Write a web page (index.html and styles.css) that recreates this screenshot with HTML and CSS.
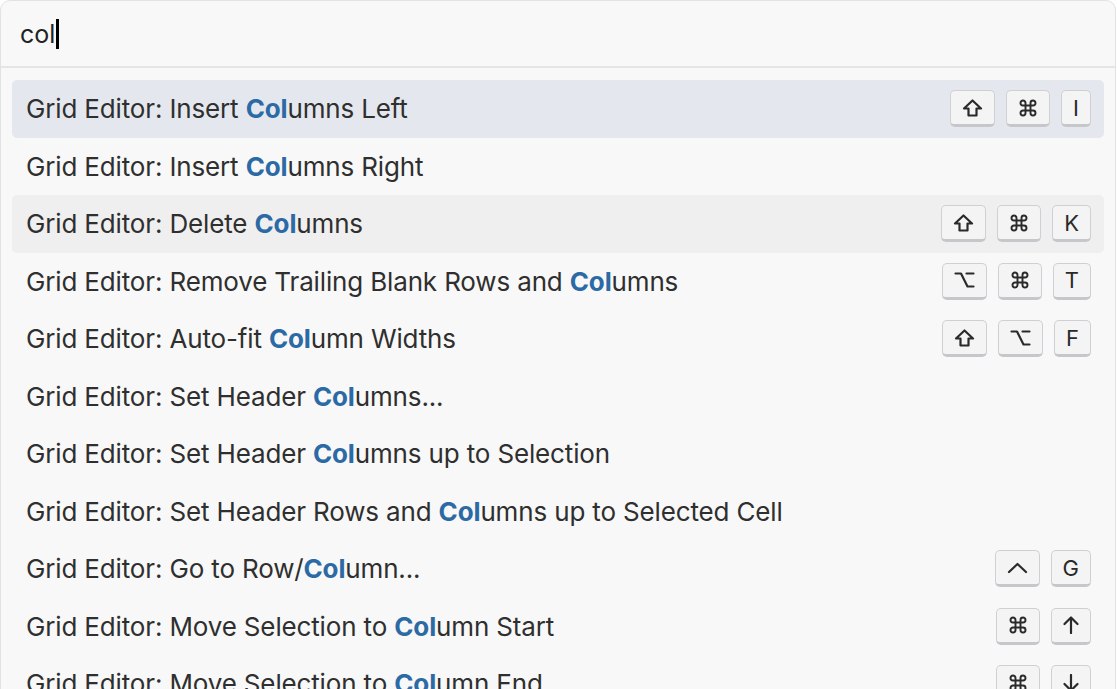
FILE: index.html
```html
<!DOCTYPE html>
<html>
<head>
<meta charset="utf-8">
<link rel="stylesheet" href="styles.css">
</head>
<body>
<div class="palette">
  <div class="input-area">
    <span class="query">col</span><span class="caret"></span>
  </div>
  <div class="list">
    <div class="row selected">
      <span class="label">Grid Editor: Insert <b>Col</b>umns Left</span>
      <span class="keys">
        <span class="key"><svg class="ico" viewBox="0 0 20 18"><path d="M10 1.5 L18.5 9.5 H14 V16.5 H6 V9.5 H1.5 Z"/></svg></span>
        <span class="key"><svg class="ico cmd" viewBox="0 0 24 24"><path d="M15 6v12a3 3 0 1 0 3-3H6a3 3 0 1 0 3 3V6a3 3 0 1 0-3 3h12a3 3 0 1 0-3-3"/></svg></span>
        <span class="key">I</span>
      </span>
    </div>
    <div class="row">
      <span class="label">Grid Editor: Insert <b>Col</b>umns Right</span>
    </div>
    <div class="row hover">
      <span class="label">Grid Editor: Delete <b>Col</b>umns</span>
      <span class="keys">
        <span class="key"><svg class="ico" viewBox="0 0 20 18"><path d="M10 1.5 L18.5 9.5 H14 V16.5 H6 V9.5 H1.5 Z"/></svg></span>
        <span class="key"><svg class="ico cmd" viewBox="0 0 24 24"><path d="M15 6v12a3 3 0 1 0 3-3H6a3 3 0 1 0 3 3V6a3 3 0 1 0-3 3h12a3 3 0 1 0-3-3"/></svg></span>
        <span class="key">K</span>
      </span>
    </div>
    <div class="row">
      <span class="label">Grid Editor: Remove Trailing Blank Rows and <b>Col</b>umns</span>
      <span class="keys">
        <span class="key"><svg class="ico" viewBox="0 0 20 18"><path d="M1 2.5 H6.5 L13 15.5 H19 M12 2.5 H19"/></svg></span>
        <span class="key"><svg class="ico cmd" viewBox="0 0 24 24"><path d="M15 6v12a3 3 0 1 0 3-3H6a3 3 0 1 0 3 3V6a3 3 0 1 0-3 3h12a3 3 0 1 0-3-3"/></svg></span>
        <span class="key">T</span>
      </span>
    </div>
    <div class="row">
      <span class="label">Grid Editor: Auto-fit <b>Col</b>umn Widths</span>
      <span class="keys">
        <span class="key"><svg class="ico" viewBox="0 0 20 18"><path d="M10 1.5 L18.5 9.5 H14 V16.5 H6 V9.5 H1.5 Z"/></svg></span>
        <span class="key"><svg class="ico" viewBox="0 0 20 18"><path d="M1 2.5 H6.5 L13 15.5 H19 M12 2.5 H19"/></svg></span>
        <span class="key">F</span>
      </span>
    </div>
    <div class="row">
      <span class="label">Grid Editor: Set Header <b>Col</b>umns...</span>
    </div>
    <div class="row">
      <span class="label">Grid Editor: Set Header <b>Col</b>umns up to Selection</span>
    </div>
    <div class="row">
      <span class="label">Grid Editor: Set Header Rows and <b>Col</b>umns up to Selected Cell</span>
    </div>
    <div class="row">
      <span class="label">Grid Editor: Go to Row/<b>Col</b>umn...</span>
      <span class="keys">
        <span class="key"><svg class="ico" viewBox="0 0 20 18"><path d="M1.5 13 L10 5 L18.5 13"/></svg></span>
        <span class="key">G</span>
      </span>
    </div>
    <div class="row">
      <span class="label">Grid Editor: Move Selection to <b>Col</b>umn Start</span>
      <span class="keys">
        <span class="key"><svg class="ico cmd" viewBox="0 0 24 24"><path d="M15 6v12a3 3 0 1 0 3-3H6a3 3 0 1 0 3 3V6a3 3 0 1 0-3 3h12a3 3 0 1 0-3-3"/></svg></span>
        <span class="key"><svg class="ico arrow" viewBox="0 0 16 18"><path d="M8 17 V1.5 M1.5 8 L8 1.5 L14.5 8"/></svg></span>
      </span>
    </div>
    <div class="row">
      <span class="label">Grid Editor: Move Selection to <b>Col</b>umn End</span>
      <span class="keys">
        <span class="key"><svg class="ico cmd" viewBox="0 0 24 24"><path d="M15 6v12a3 3 0 1 0 3-3H6a3 3 0 1 0 3 3V6a3 3 0 1 0-3 3h12a3 3 0 1 0-3-3"/></svg></span>
        <span class="key"><svg class="ico arrow" viewBox="0 0 16 18"><path d="M8 1 V16.5 M1.5 10 L8 16.5 L14.5 10"/></svg></span>
      </span>
    </div>
  </div>
</div>
</body>
</html>
```

FILE: styles.css
```css
html, body {
  margin: 0;
  padding: 0;
  background: #ffffff;
  overflow: hidden;
}

body {
  width: 1117px;
  height: 689px;
  font-family: Inter, "Liberation Sans", sans-serif;
  color: #333333;
}

.palette {
  width: 1116px;
  height: 720px;
  box-sizing: border-box;
  background: #f8f8f8;
  border: 1px solid #e2e2e2;
  border-radius: 10px;
  overflow: hidden;
}

.input-area {
  height: 65px;
  display: flex;
  align-items: center;
  padding-left: 19px;
  border-bottom: 2px solid #e5e5e5;
}

.query {
  font-size: 25px;
  color: #222222;
  line-height: 30px;
}

.caret {
  display: inline-block;
  width: 3px;
  height: 30px;
  background: #000000;
  margin-left: 1px;
}

.list {
  padding: 12px 11px 0 11px;
}

.row {
  height: 57.5px;
  display: flex;
  align-items: center;
  justify-content: space-between;
  padding: 0 13px 0 14px;
  border-radius: 5px;
}

.row.selected {
  background: #e4e8ee;
}

.row.hover {
  background: #efefef;
}

.label {
  font-size: 26px;
  white-space: nowrap;
  letter-spacing: -0.15px;
  color: #2f2f2f;
}

.label b {
  font-weight: 700;
  color: #2c6aa6;
}

.keys {
  display: flex;
  gap: 11px;
}

.key {
  display: flex;
  align-items: center;
  justify-content: center;
  box-sizing: border-box;
  height: 37px;
  padding: 0 11px;
  background: #f4f4f5;
  border: 1px solid #cfd0d3;
  border-bottom: 3px solid #c6c7cb;
  border-radius: 5px;
  font-size: 22px;
  color: #2a2a2a;
  line-height: 1;
}

.ico {
  width: 21px;
  height: 18px;
  fill: none;
  stroke: #2a2a2a;
  stroke-width: 2.2;
  stroke-linejoin: round;
  stroke-linecap: round;
}

.ico.cmd {
  width: 20px;
  height: 20px;
  stroke-width: 2.3;
}

.ico.arrow {
  width: 16px;
  height: 18px;
}
```
